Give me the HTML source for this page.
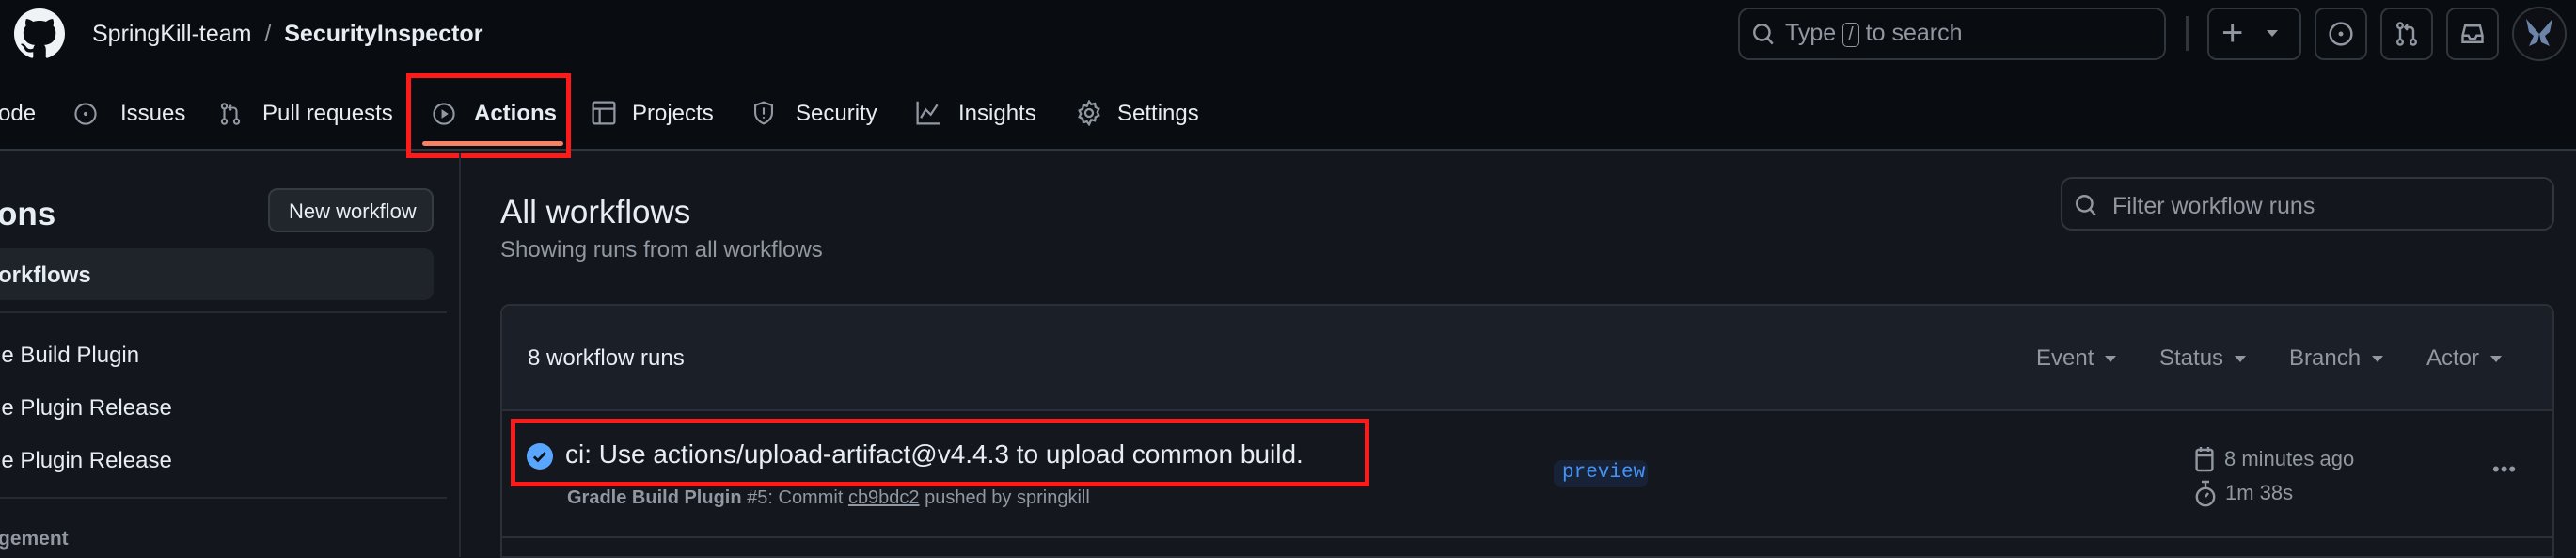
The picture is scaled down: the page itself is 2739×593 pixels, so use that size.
<!DOCTYPE html>
<html><head><meta charset="utf-8"><style>
*{margin:0;padding:0;box-sizing:border-box}
body{width:2739px;height:592px;overflow:hidden;background:#13161c;font-family:"Liberation Sans",sans-serif;position:relative;color:#e6edf3}
.a{position:absolute;white-space:nowrap}
.hdr{position:absolute;left:0;top:0;width:2739px;height:161px;background:#090c10;border-bottom:3px solid #30363d}
.nav{font-size:24px;color:#e6edf3;top:107px}
.ico{position:absolute}
.btn{position:absolute;border:2px solid #30363d;border-radius:10px}
.mut{color:#9198a1}
.car{display:inline-block;margin-left:12px;vertical-align:middle;border-left:6px solid transparent;border-right:6px solid transparent;border-top:7px solid #9198a1}
</style></head><body>
<div class="hdr"></div>
<svg class="ico" style="left:15px;top:9px" width="54" height="54" viewBox="0 0 16 16"><path fill="#f0f3f6" d="M8 0C3.58 0 0 3.58 0 8c0 3.540 2.29 6.53 5.47 7.59.4.07.55-.17.55-.38 0-.19-.01-.82-.01-1.49-2.01.37-2.53-.49-2.690-.94-.09-.23-.48-.94-.82-1.13-.28-.15-.68-.52-.01-.53.63-.01 1.08.58 1.23.82.72 1.21 1.87.87 2.33.66.07-.52.28-.87.51-1.07-1.78-.2-3.64-.89-3.64-3.95 0-.87.31-1.59.82-2.15-.08-.2-.36-1.02.08-2.12 0 0 .67-.21 2.2.82.64-.18 1.32-.27 2-.27.68 0 1.36.09 2 .27 1.53-1.04 2.2-.82 2.2-.82.44 1.1.16 1.92.08 2.12.51.56.82 1.27.82 2.15 0 3.07-1.87 3.75-3.65 3.95.29.25.54.73.54 1.48 0 1.07-.01 1.93-.01 2.2 0 .21.15.46.55.38A8.013 8.013 0 0016 8c0-4.42-3.58-8-8-8z"/></svg>
<div class="a" style="left:98px;top:22px;font-size:25px;color:#e6edf3">SpringKill-team <span class="mut">&nbsp;/&nbsp;</span> <b>SecurityInspector</b></div>
<div class="btn" style="left:1848px;top:8px;width:455px;height:56px;border-radius:12px"></div>
<svg class="ico" style="left:1862px;top:22px" width="26" height="28" viewBox="0 0 16 16"><circle cx="7" cy="7" r="5" fill="none" stroke="#9198a1" stroke-width="1.5"/><path d="M10.5 10.5L14 14.5" stroke="#9198a1" stroke-width="1.5"/></svg>
<div class="a mut" style="left:1898px;top:21px;font-size:25px">Type <span style="display:inline-block;border:1.5px solid #9198a1;border-radius:5px;padding:0 5px;font-size:20px;line-height:24px">/</span> to search</div>
<div class="a" style="left:2324px;top:17px;width:3px;height:37px;background:#30363d"></div>
<div class="btn" style="left:2347px;top:8px;width:100px;height:56px"></div>
<div class="a mut" style="left:2362px;top:10px;font-size:40px;line-height:50px">+</div>
<div class="a" style="left:2410px;top:32px;border-left:6px solid transparent;border-right:6px solid transparent;border-top:7px solid #9198a1"></div>
<div class="btn" style="left:2461px;top:8px;width:56px;height:56px"></div>
<svg class="ico" style="left:2475px;top:22px" width="28" height="28" viewBox="0 0 16 16"><circle cx="8" cy="8" r="6.5" fill="none" stroke="#9198a1" stroke-width="1.4"/><circle cx="8" cy="8" r="1.4" fill="#9198a1"/></svg>
<div class="btn" style="left:2531px;top:8px;width:56px;height:56px"></div>
<svg class="ico" style="left:2545px;top:22px" width="28" height="28" viewBox="0 0 16 16" fill="none" stroke="#9198a1" stroke-width="1.4"><circle cx="4" cy="3" r="1.6"/><circle cx="4" cy="13" r="1.6"/><circle cx="12" cy="13" r="1.6"/><path d="M4 4.6v6.8M12 11.4V6a2 2 0 00-2-2H7M8.5 2.3L7 4l1.5 1.7"/></svg>
<div class="btn" style="left:2601px;top:8px;width:56px;height:56px"></div>
<svg class="ico" style="left:2615px;top:22px" width="28" height="28" viewBox="0 0 16 16" fill="none" stroke="#9198a1" stroke-width="1.4"><path d="M2 9l1.5-6h9L14 9v4H2zM2 9h3.5l1 2h3l1-2H14"/></svg>
<div class="a" style="left:2671px;top:7px;width:58px;height:58px;border-radius:50%;background:#0d0f14;border:2px solid #30363d"></div>
<svg class="ico" style="left:2680px;top:14px" width="40" height="44" viewBox="0 0 40 44"><path d="M20 22L6 6 9 20 14 24 9 35 18 31zM20 22L34 6 31 20 26 24 31 35 22 31z" fill="#6b84a8"/></svg>
<div class="a nav" style="left:-2px">ode</div>
<svg class="ico" style="left:78px;top:108px" width="26" height="26" viewBox="0 0 16 16"><circle cx="8" cy="8" r="6.5" fill="none" stroke="#9198a1" stroke-width="1.3"/><circle cx="8" cy="8" r="1.3" fill="#9198a1"/></svg>
<div class="a nav" style="left:128px">Issues</div>
<svg class="ico" style="left:232px;top:108px" width="26" height="26" viewBox="0 0 16 16" fill="none" stroke="#9198a1" stroke-width="1.3"><circle cx="4" cy="3" r="1.6"/><circle cx="4" cy="13" r="1.6"/><circle cx="12" cy="13" r="1.6"/><path d="M4 4.6v6.8M12 11.4V6a2 2 0 00-2-2H7M8.5 2.3L7 4l1.5 1.7"/></svg>
<div class="a nav" style="left:279px">Pull requests</div>
<svg class="ico" style="left:459px;top:108px" width="26" height="26" viewBox="0 0 16 16"><circle cx="8" cy="8" r="6.5" fill="none" stroke="#9198a1" stroke-width="1.3"/><path d="M6.5 5v6l4.5-3z" fill="#9198a1"/></svg>
<div class="a nav" style="left:504px;font-weight:bold">Actions</div>
<div class="a" style="left:449px;top:150px;width:150px;height:5px;border-radius:3px;background:#f78166"></div>
<div class="a" style="left:432px;top:78px;width:175px;height:90px;border:5px solid #ff1a1a"></div>
<svg class="ico" style="left:628px;top:106px" width="28" height="28" viewBox="0 0 16 16" fill="none" stroke="#9198a1" stroke-width="1.3"><rect x="1.5" y="1.5" width="13" height="13" rx="1"/><path d="M1.5 5.5h13M5.5 5.5v9"/></svg>
<div class="a nav" style="left:672px">Projects</div>
<svg class="ico" style="left:799px;top:106px" width="26" height="28" viewBox="0 0 16 16" fill="none" stroke="#9198a1" stroke-width="1.3"><path d="M8 1L2.5 3v5c0 3.5 3 6 5.5 7 2.5-1 5.5-3.5 5.5-7V3z"/><path d="M8 4.5v4.5M8 10.5v1"/></svg>
<div class="a nav" style="left:846px">Security</div>
<svg class="ico" style="left:973px;top:106px" width="28" height="28" viewBox="0 0 16 16" fill="none" stroke="#9198a1" stroke-width="1.3"><path d="M1.5 1v13.5H15M3.5 11l3-5 3 3 4-6"/></svg>
<div class="a nav" style="left:1019px">Insights</div>
<svg class="ico" style="left:1144px;top:106px" width="28" height="28" viewBox="0 0 16 16" fill="none" stroke="#9198a1" stroke-width="1.3"><circle cx="8" cy="8" r="2.3"/><path d="M8 1l1.3 1.8 2.2-.5.4 2.2 2 1-.9 2 .9 2-2 1-.4 2.2-2.2-.5L8 15l-1.3-1.8-2.2.5-.4-2.2-2-1 .9-2-.9-2 2-1 .4-2.200 2.2.5z"/></svg>
<div class="a nav" style="left:1188px">Settings</div>
<div class="a" style="left:488px;top:163px;width:2px;height:429px;background:#262b32"></div>
<div class="a" style="left:-3px;top:208px;font-size:35px;font-weight:bold">ons</div>
<div class="btn" style="left:285px;top:200px;width:176px;height:47px;background:#21262d;border-color:#363b42;border-radius:10px"></div>
<div class="a" style="left:307px;top:212px;font-size:22px">New workflow</div>
<div class="a" style="left:-10px;top:264px;width:471px;height:55px;border-radius:10px;background:#1f232a"></div>
<div class="a" style="left:-2px;top:279px;font-size:24px;font-weight:bold">orkflows</div>
<div class="a" style="left:0;top:331px;width:475px;height:2px;background:#262b32"></div>
<div class="a" style="left:-4px;top:364px;font-size:24px">le Build Plugin</div>
<div class="a" style="left:-4px;top:420px;font-size:24px">le Plugin Release</div>
<div class="a" style="left:-4px;top:476px;font-size:24px">le Plugin Release</div>
<div class="a" style="left:0;top:528px;width:475px;height:2px;background:#262b32"></div>
<div class="a mut" style="left:-2px;top:561px;font-size:21px;font-weight:bold">gement</div>
<div class="a" style="left:532px;top:206px;font-size:35px">All workflows</div>
<div class="a mut" style="left:532px;top:252px;font-size:24px">Showing runs from all workflows</div>
<div class="btn" style="left:2191px;top:188px;width:525px;height:57px;border-radius:12px"></div>
<svg class="ico" style="left:2205px;top:203px" width="26" height="30" viewBox="0 0 16 16"><circle cx="7" cy="7" r="5" fill="none" stroke="#9198a1" stroke-width="1.5"/><path d="M10.5 10.5L14 14.5" stroke="#9198a1" stroke-width="1.5"/></svg>
<div class="a mut" style="left:2246px;top:205px;font-size:25px">Filter workflow runs</div>
<div class="a" style="left:532px;top:323px;width:2184px;height:270px;border:2px solid #2b3038;border-radius:10px 10px 0 0;background:#14171d"></div>
<div class="a" style="left:534px;top:325px;width:2180px;height:112px;border-radius:9px 9px 0 0;background:#1b1f27;border-bottom:2px solid #2b3038"></div>
<div class="a" style="left:561px;top:367px;font-size:24px">8 workflow runs</div>
<div class="a mut" style="left:2165px;top:367px;font-size:24px">Event<span class="car"></span></div>
<div class="a mut" style="left:2296px;top:367px;font-size:24px">Status<span class="car"></span></div>
<div class="a mut" style="left:2434px;top:367px;font-size:24px">Branch<span class="car"></span></div>
<div class="a mut" style="left:2580px;top:367px;font-size:24px">Actor<span class="car"></span></div>
<div class="a" style="left:543px;top:445px;width:913px;height:72px;border:5px solid #ff1a1a"></div>
<svg class="ico" style="left:560px;top:471px" width="28" height="28" viewBox="0 0 16 16"><circle cx="8" cy="8" r="8" fill="#58a6ff"/><path d="M4.5 8.2l2.3 2.3 4.5-4.7" fill="none" stroke="#0d1117" stroke-width="1.6"/></svg>
<div class="a" style="left:601px;top:467px;font-size:28px">ci: Use actions/upload-artifact@v4.4.3 to upload common build.</div>
<div class="a mut" style="left:603px;top:518px;font-size:20px"><b>Gradle Build Plugin</b> #5: Commit <span style="text-decoration:underline">cb9bdc2</span> pushed by springkill</div>
<div class="a" style="left:1652px;top:489px;width:100px;height:29px;border-radius:8px;background:#172236"></div>
<div class="a" style="left:1661px;top:491px;font-size:21px;font-family:'Liberation Mono',monospace;color:#4493f8">preview</div>
<svg class="ico" style="left:2334px;top:474px" width="20" height="28" viewBox="0 0 10 14" fill="none" stroke="#9198a1" stroke-width="1.2"><rect x="0.8" y="2" width="8.4" height="11" rx="1"/><path d="M0.8 5h8.4M3 0.5v2.5M7 0.5v2.5"/></svg>
<div class="a mut" style="left:2365px;top:475px;font-size:22px">8 minutes ago</div>
<svg class="ico" style="left:2334px;top:510px" width="22" height="30" viewBox="0 0 11 15" fill="none" stroke="#9198a1" stroke-width="1.2"><circle cx="5.5" cy="9" r="4.6"/><path d="M3.5 1h4M5.5 1v3.3M5.5 9l1.5-2"/></svg>
<div class="a mut" style="left:2366px;top:511px;font-size:22px">1m 38s</div>
<div class="a mut" style="left:2650px;top:486px;font-size:22px;letter-spacing:1px">•••</div>
<div class="a" style="left:534px;top:570px;width:2180px;height:2px;background:#2b3038"></div>
</body></html>
